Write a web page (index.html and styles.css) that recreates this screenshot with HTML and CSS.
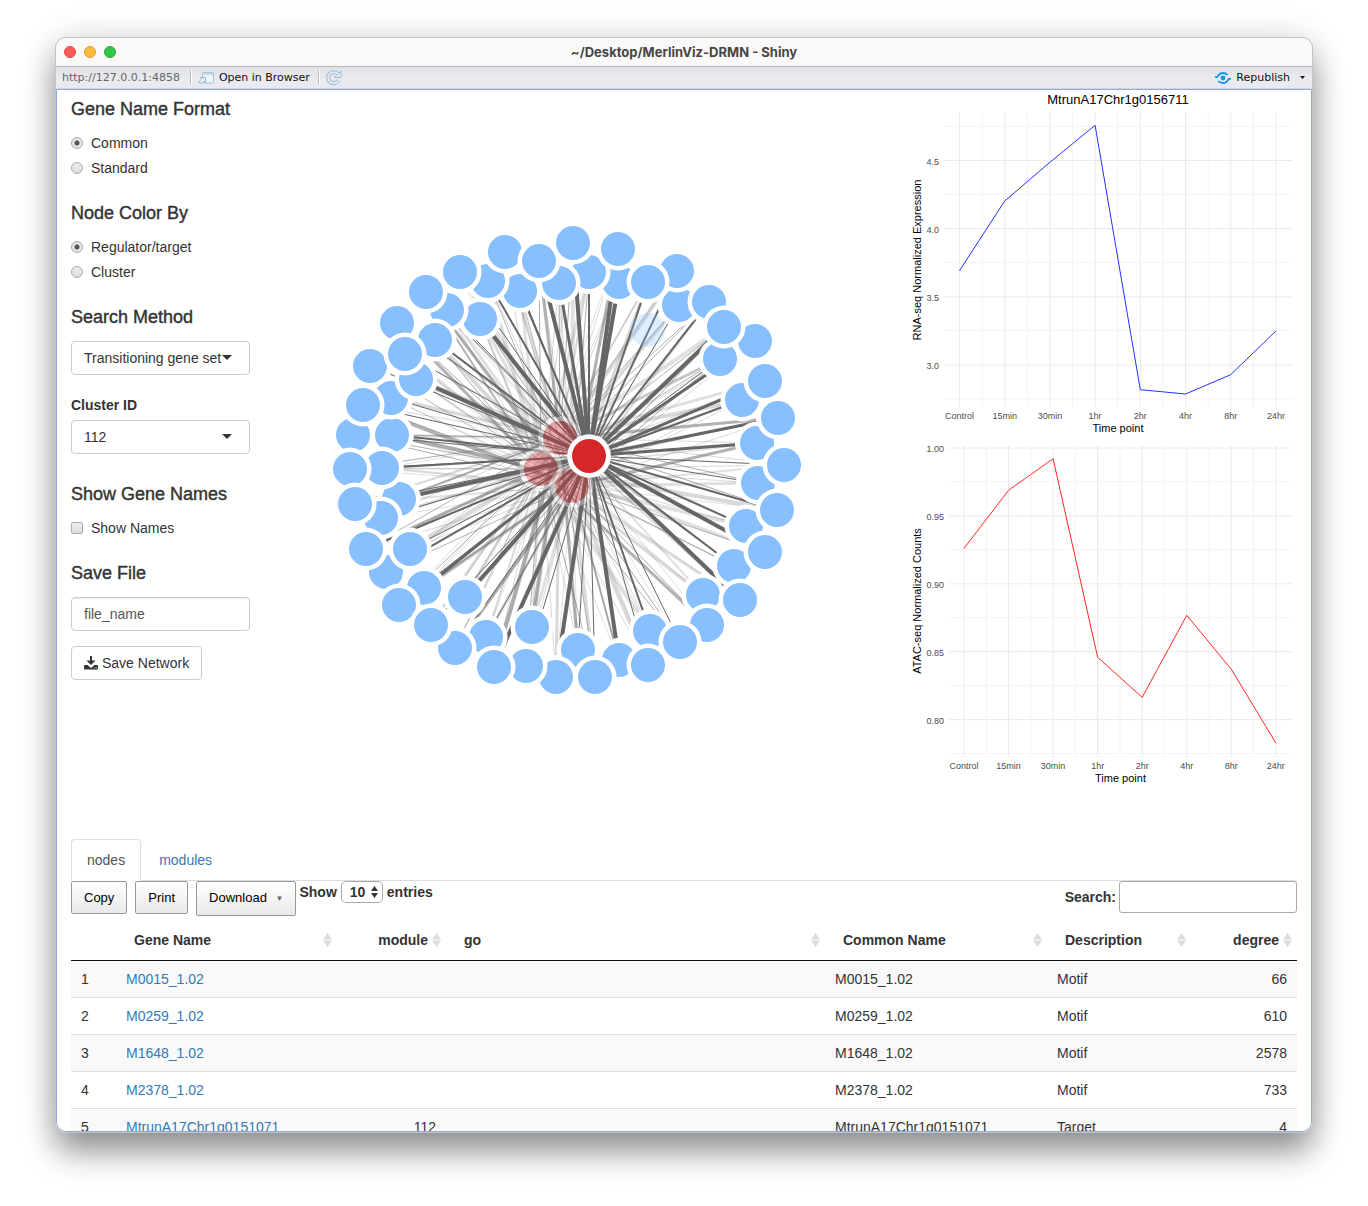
FILE: index.html
```html
<!DOCTYPE html>
<html lang="en">
<head>
<meta charset="utf-8">
<title>~/Desktop/MerlinViz-DRMN - Shiny</title>
<link rel="stylesheet" href="styles.css">
</head>
<body>
<div class="window">
  <header class="titlebar">
    <div class="lights"><span class="light light-close"></span><span class="light light-min"></span><span class="light light-zoom"></span></div>
    <div class="window-title">~/Desktop/MerlinViz-DRMN - Shiny</div>
  </header>
  <div class="toolbar">
    <span class="url">http://127.0.0.1:4858</span>
    <span class="sep"></span>
    <button class="tool" type="button">
      <svg width="16" height="12" viewBox="0 0 16 12" aria-hidden="true"><rect x="4.500" y=".5" width="11" height="10.500" rx="1" fill="#eef6fc" stroke="#a5bfd6"/><path d="M5 1h10v2H5z" fill="#c5daea"/><path d="M.6 10.200 3.800 7 2.500 5.500h5v5L6 9.200l-3 2.300z" fill="#e3edf5" stroke="#93a9bd" stroke-width=".8"/></svg>
      Open in Browser
    </button>
    <span class="sep"></span>
    <button class="tool" type="button" aria-label="Reload">
      <svg width="16" height="16" viewBox="0 0 16 16" aria-hidden="true"><path d="M12.600 10.200A5.500 5.500 0 1 1 11.800 4" fill="none" stroke="#a9b9cb" stroke-width="4"/><path d="M15 1v6.500H8.500z" fill="#dfeaf5" stroke="#a9b9cb"/><path d="M12.600 10.200A5.500 5.500 0 1 1 11.800 4" fill="none" stroke="#e2edf8" stroke-width="2"/></svg>
    </button>
    <button class="tool republish" type="button">
      <svg width="16" height="12" viewBox="0 0 16 12" aria-hidden="true"><circle cx="8" cy="6" r="2.400" fill="#1298e6"/><path d="M0 5.200h2.300C3.500 2.500 5.500 1 8 1c2 0 3.500.7 4.700 2" fill="none" stroke="#1298e6" stroke-width="1.800"/><path d="M16 6.800h-2.300C12.500 9.500 10.500 11 8 11c-2 0-3.500-.7-4.700-2" fill="none" stroke="#1298e6" stroke-width="1.800"/></svg>
      Republish
      <svg class="menu-caret" width="5" height="3" viewBox="0 0 5 3" aria-hidden="true"><path d="M0 0h5L2.500 3z" fill="#111"/></svg>
    </button>
  </div>
  <main class="page">
    <div class="panels">
      <form class="sidebar">
        <h4>Gene Name Format</h4>
        <label class="choice"><input type="radio" name="format" checked>Common</label>
        <label class="choice"><input type="radio" name="format">Standard</label>
        <h4>Node Color By</h4>
        <label class="choice"><input type="radio" name="color" checked>Regulator/target</label>
        <label class="choice"><input type="radio" name="color">Cluster</label>
        <h4>Search Method</h4>
        <div class="select"><select aria-label="Search Method"><option>Transitioning gene set</option></select></div>
        <label class="field-label" for="cluster">Cluster ID</label>
        <div class="select"><select id="cluster"><option>112</option></select></div>
        <h4>Show Gene Names</h4>
        <label class="choice"><input type="checkbox">Show Names</label>
        <h4>Save File</h4>
        <input class="text" type="text" aria-label="Save File" value="file_name">
        <button class="save" type="button">
          <svg width="14" height="14" viewBox="0 0 14 14" aria-hidden="true"><path d="M6 0h2v4.500h3.500L7 9 2.500 4.500H6z" fill="#333"/><path d="M1 9h2.500L7 12l3.500-3H13q1 0 1 1v2.500q0 1-1 1H1q-1 0-1-1V10q0-1 1-1z" fill="#333"/><path d="M10.500 11.800h.8m.8 0h.8" stroke="#fff"/></svg>
          Save Network
        </button>
      </form>
      <div class="network"><svg id="network" viewBox="280 90 599 640" role="img" aria-label="Gene network"></svg></div>
      <div class="charts">
        <svg id="rna" viewBox="907 90 390 350" role="img" aria-label="RNA-seq"></svg>
        <svg id="atac" viewBox="907 440 390 350" role="img" aria-label="ATAC-seq"></svg>
      </div>
    </div>
    <section class="data">
      <nav class="tabs"><a class="tab active" href="#nodes">nodes</a><a class="tab" href="#modules">modules</a></nav>
      <div class="controls">
        <button class="dt-button" type="button">Copy</button>
        <button class="dt-button" type="button">Print</button>
        <button class="dt-button dt-download" type="button">Download <span class="down">▼</span></button>
        <label class="length">Show
          <span class="stepper"><select><option>10</option></select><svg width="7" height="12" viewBox="0 0 7 12" aria-hidden="true"><path d="M0 5 3.500 0 7 5zM0 7h7l-3.500 5z" fill="#333"/></svg></span>
          entries</label>
        <label class="search">Search:<input type="search"></label>
      </div>
      <table id="nodes">
        <colgroup><col class="c-index"><col class="c-gene"><col class="c-module"><col><col class="c-common"><col class="c-desc"><col class="c-degree"></colgroup>
        <thead><tr>
          <th></th>
          <th><div class="head">Gene Name</div></th>
          <th class="num"><div class="head">module</div></th>
          <th><div class="head">go</div></th>
          <th><div class="head">Common Name</div></th>
          <th><div class="head">Description</div></th>
          <th class="num"><div class="head">degree</div></th>
        </tr></thead>
        <tbody>
          <tr><td>1</td><td><a href="#g1">M0015_1.02</a></td><td class="num"></td><td></td><td>M0015_1.02</td><td>Motif</td><td class="num">66</td></tr>
          <tr><td>2</td><td><a href="#g2">M0259_1.02</a></td><td class="num"></td><td></td><td>M0259_1.02</td><td>Motif</td><td class="num">610</td></tr>
          <tr><td>3</td><td><a href="#g3">M1648_1.02</a></td><td class="num"></td><td></td><td>M1648_1.02</td><td>Motif</td><td class="num">2578</td></tr>
          <tr><td>4</td><td><a href="#g4">M2378_1.02</a></td><td class="num"></td><td></td><td>M2378_1.02</td><td>Motif</td><td class="num">733</td></tr>
          <tr><td>5</td><td><a href="#g5">MtrunA17Chr1g0151071</a></td><td class="num">112</td><td></td><td>MtrunA17Chr1g0151071</td><td>Target</td><td class="num">4</td></tr>
        </tbody>
      </table>
    </section>
  </main>
</div>
<script src="script.js"></script>
</body>
</html>
```
FILE: styles.css
```css
* { box-sizing: border-box; }
body {
  margin: 0;
  height: 100vh;
  padding: 38px 56px 74px;
  background: #fff;
  color: #333;
  font: 14px/20px "Liberation Sans", Arial, sans-serif;
  overflow: hidden;
}
button, input, select { font: inherit; color: inherit; }
a { color: #337ab7; text-decoration: none; }

.window {
  height: 100%;
  display: flex;
  flex-direction: column;
  border-radius: 10px;
  overflow: hidden;
  background: #fff;
  box-shadow: 0 0 0 1px #c4c4c4, 0 0 36px rgba(0, 0, 0, .14), 0 20px 32px rgba(0, 0, 0, .4);
}
.titlebar {
  flex: none;
  height: 29px;
  display: grid;
  grid-template-columns: 1fr auto 1fr;
  align-items: center;
  padding: 0 8px;
  background: #fbf9f8;
  border-bottom: 1px solid #b3b6bd;
}
.lights { display: flex; gap: 8px; }
.light { width: 12px; height: 12px; border-radius: 50%; border: 1px solid; }
.light-close { background: #fc5b57; border-color: #e2463f; }
.light-min { background: #fdb93e; border-color: #e0a032; }
.light-zoom { background: #34c648; border-color: #27a837; }
.window-title { font: 700 13px/16px Inter, sans-serif; color: #464646; }

.toolbar {
  flex: none;
  height: 22px;
  display: flex;
  align-items: center;
  gap: 6px;
  padding: 0 6px;
  background: linear-gradient(#dfe2e8, #eaebef 60%, #e8eaef);
  border-bottom: 1px solid #d2d5db;
  font: 11px/16px "DejaVu Sans", sans-serif;
  color: #111;
}
.url { color: #666; padding-right: 4px; }
.sep { width: 2px; height: 15px; background: #fff; border-left: 1px solid #b8bcc4; }
.tool {
  display: flex;
  align-items: center;
  gap: 5px;
  padding: 0;
  margin-right: 2px;
  border: 0;
  background: none;
}
.republish { margin-left: auto; margin-right: 1px; }
.menu-caret { margin-left: 5px; }

.page {
  flex: 1;
  min-height: 0;
  overflow: hidden;
  border: 1px solid #8eaad8;
  border-radius: 0 0 10px 10px;
}
.panels { display: grid; grid-template-columns: 2fr 6fr 4fr; }
.sidebar { display: flex; flex-direction: column; padding: 9px 16px 0 14px; }
h4 { margin: 20px 0 14px; font-size: 18px; line-height: 20px; font-weight: 400; -webkit-text-stroke: 0.4px #333; }
h4:first-child { margin-top: 0; }
.choice { display: flex; align-items: center; gap: 8px; margin-bottom: 5px; }
.choice input {
  appearance: none;
  width: 12px;
  height: 12px;
  margin: 0;
  border: 1px solid #aaa;
  background: linear-gradient(#eee, #ddd);
}
.choice input[type="radio"] { border-radius: 50%; }
.choice input[type="checkbox"] { border-radius: 2px; }
.choice input:checked { background: radial-gradient(circle, #555 0 2px, #e6e6e6 3px); }
.select { position: relative; }
.select + h4 { margin-top: 30px; }
.select select, .text {
  appearance: none;
  display: block;
  width: 100%;
  height: 34px;
  padding: 0 12px;
  border: 1px solid #ccc;
  border-radius: 4px;
  background: #fff;
}
.select::after {
  content: "";
  position: absolute;
  right: 18px;
  top: 14px;
  border: 5px solid transparent;
  border-top-color: #333;
  border-bottom: 0;
}
.text { color: #555; box-shadow: inset 0 1px 1px rgba(0, 0, 0, .08); }
.field-label { margin: 20px 0 5px; font-weight: 700; }
.save {
  align-self: flex-start;
  display: flex;
  align-items: center;
  gap: 4px;
  height: 34px;
  margin-top: 15px;
  padding: 0 12px;
  border: 1px solid #ccc;
  border-radius: 4px;
  background: #fff;
}
.network { padding: 0 14px; }
.network svg, .charts svg { display: block; width: 100%; height: auto; }
.charts { padding: 0 14px; }

.edge { fill: none; stroke: #666; }
.halo { fill: #fff; }
.target { fill: #87bfff; }
.regulator { fill: #d62728; }
.axis-tick { font-size: 9px; fill: #4d4d4d; }
.axis-title { font-size: 11px; fill: #000; }
.chart-title { font-size: 13px; fill: #000; }
.grid-major { stroke: #ebebeb; }
.grid-minor { stroke: #f4f4f4; }

.data { padding: 0 14px; margin-top: 49px; }
.tabs { display: flex; gap: 2px; border-bottom: 1px solid #ddd; }
.tab { padding: 10px 16px; border-top: 1px solid transparent; }
.tab.active {
  padding: 10px 15px;
  margin-bottom: -1px;
  border: 1px solid #ddd;
  border-bottom-color: #fff;
  border-radius: 4px 4px 0 0;
  color: #555;
}
.controls { display: flex; align-items: flex-start; height: 39px; }
.dt-button {
  height: 33px;
  padding: 0 12px;
  margin-right: 8px;
  border: 1px solid #999;
  border-radius: 2px;
  background: linear-gradient(#fff, #e9e9e9);
  color: #000;
  font-size: 13px;
}
.dt-download { height: 35px; margin-right: 3px; }
.down { padding-left: 5px; font-size: 8px; vertical-align: 1px; color: #666; }
.length, .search { display: flex; align-items: center; gap: 4px; font-weight: 700; }
.length { height: 22px; }
.stepper { display: flex; align-items: center; height: 22px; padding-right: 4px; border: 1px solid #aaa; border-radius: 5px; }
.stepper select { appearance: none; width: 29px; padding: 0 0 0 8px; border: 0; background: none; font-weight: 700; }
.search { margin-left: auto; gap: 3px; }
.search input { appearance: none; width: 178px; height: 32px; border: 1px solid #aaa; border-radius: 3px; }

table { width: 100%; table-layout: fixed; border-collapse: separate; border-spacing: 0; }
.c-index { width: 45px; }
.c-gene { width: 221px; }
.c-module { width: 109px; }
.c-common { width: 222px; }
.c-desc { width: 144px; }
.c-degree { width: 106px; }
th { padding: 0; border-bottom: 1px solid #111; text-align: left; }
.head { display: flex; align-items: center; justify-content: space-between; gap: 4px; padding: 10px 5px 10px 18px; }
th.num .head { justify-content: flex-end; }
.sort { flex: none; fill: #dcdcdc; }
td { height: 37px; padding: 8px 10px; border-bottom: 1px solid #ddd; white-space: nowrap; }
tbody tr:nth-child(odd) { background: #f9f9f9; }
td.num { text-align: right; }
```
FILE: script.js
```js
const NS = 'http://www.w3.org/2000/svg';
function add(parent, tag, attrs, text) {
  const el = document.createElementNS(NS, tag);
  for (const key in attrs) el.setAttribute(key, attrs[key]);
  if (text) el.textContent = text;
  parent.appendChild(el);
  return el;
}

// Targets in drawing order: x, y, weight of the edge to the selected regulator.
const targets = [
  [619, 282, 4], [589, 272, 2], [679, 305, 1], [677, 271, 2], [709, 302, 2], [755, 341, 3],
  [720, 359, 1], [742, 400, 2], [757, 443, 3], [758, 483, 1], [746, 526, 2], [734, 566, 2],
  [703, 595, 0], [707, 625, 0], [650, 631, 2], [619, 660, 4], [578, 650, 1], [556, 677, 4],
  [526, 666, 1], [486, 637, 1], [455, 648, 1], [424, 588, 3], [386, 572, 2], [399, 499, 4],
  [381, 518, 1], [392, 435, 2], [382, 468, 2], [353, 435, 1], [391, 398, 1], [416, 379, 4],
  [480, 319, 4], [447, 310, 1], [435, 340, 2], [370, 366, 1], [397, 323, 1], [520, 291, 2],
  [488, 281, 2], [559, 283, 3], [505, 252, 1], [539, 261, 4], [460, 272, 1], [426, 292, 1],
  [405, 354, 1], [363, 405, 1], [350, 469, 1], [355, 504, 1], [366, 549, 2], [410, 549, 1],
  [399, 605, 1], [465, 597, 4], [431, 625, 1], [494, 667, 4], [532, 627, 0], [595, 677, 1],
  [648, 665, 1], [680, 642, 1], [740, 600, 4], [765, 552, 4], [777, 510, 2], [784, 465, 1],
  [778, 418, 3], [765, 381, 3], [724, 327, 4], [648, 282, 2], [618, 249, 4], [573, 243, 4]
];
const hub = [589, 456];
const dimmed = [[560, 438], [541, 469], [572, 486]];

function edge(svg, from, to, width, opacity) {
  const dx = to[0] - from[0], dy = to[1] - from[1];
  const k = 22 / Math.hypot(dx, dy);
  add(svg, 'line', { class: 'edge', x1: from[0] + dx * k, y1: from[1] + dy * k, x2: to[0] - dx * k, y2: to[1] - dy * k,
    'stroke-width': width, 'stroke-opacity': opacity });
}
function node(svg, kind, x, y, opacity) {
  const g = add(svg, 'g', { opacity });
  add(g, 'circle', { class: 'halo', cx: x, cy: y, r: 21.5 });
  add(g, 'circle', { class: kind, cx: x, cy: y, r: 17 });
}

const net = document.getElementById('network');
const dimWidths = [1, 1, 3, 1, 2, 1, 4, 1, 1, 3, 1];
const dimOpacity = [.25, .5, .25, .2, .55, .2, .25];
targets.forEach((t, i) => dimmed.forEach((h, j) => {
  const n = i * 3 + j;
  edge(net, h, t, dimWidths[n * 5 % 11], dimOpacity[n * 3 % 7]);
}));
targets.forEach(t => { if (t[2]) edge(net, hub, t, t[2], 1); });
dimmed.forEach(h => node(net, 'regulator', h[0], h[1], .35));
add(net, 'circle', { class: 'target', cx: 648, cy: 330, r: 17, opacity: .27 });
targets.forEach(t => node(net, 'target', t[0], t[1], 1));
node(net, 'regulator', hub[0], hub[1], 1);

function chart(id, c) {
  const svg = document.getElementById(id);
  const times = ['Control', '15min', '30min', '1hr', '2hr', '4hr', '8hr', '24hr'];
  const x = i => c.x0 + i * c.dx;
  c.minor.forEach(y => add(svg, 'line', { class: 'grid-minor', x1: c.left, x2: 1292, y1: y, y2: y }));
  times.forEach((t, i) => { if (i < 7) add(svg, 'line', { class: 'grid-minor', x1: x(i + .5), x2: x(i + .5), y1: c.top, y2: c.bottom }); });
  c.labels.forEach((label, i) => {
    const y = c.y0 + i * c.dy;
    add(svg, 'line', { class: 'grid-major', x1: c.left, x2: 1292, y1: y, y2: y });
    add(svg, 'text', { class: 'axis-tick', x: c.left - 5, y: y + 4, 'text-anchor': 'end' }, label);
  });
  times.forEach((t, i) => {
    add(svg, 'line', { class: 'grid-major', x1: x(i), x2: x(i), y1: c.top, y2: c.bottom });
    add(svg, 'text', { class: 'axis-tick', x: x(i), y: c.bottom + 12, 'text-anchor': 'middle' }, t);
  });
  add(svg, 'polyline', { points: c.data.map((y, i) => x(i) + ',' + y).join(' '), fill: 'none', stroke: c.color, 'stroke-width': 1 });
  const mid = (c.left + 1292) / 2;
  add(svg, 'text', { class: 'axis-title', x: mid, y: c.bottom + 25, 'text-anchor': 'middle' }, 'Time point');
  add(svg, 'text', { class: 'axis-title', 'text-anchor': 'middle', transform: `translate(921 ${c.midY}) rotate(-90)` }, c.title);
  if (c.heading) add(svg, 'text', { class: 'chart-title', x: mid, y: 104, 'text-anchor': 'middle' }, c.heading);
}
chart('rna', {
  left: 944, top: 112, bottom: 407, x0: 959.5, dx: 45.2, y0: 160.5, dy: 68.2, midY: 260, color: '#1f35ff',
  minor: [126.5, 194.5, 262.5, 330.5, 399], labels: ['4.5', '4.0', '3.5', '3.0'],
  data: [270.7, 201, 162.3, 125.3, 389.7, 394, 374.7, 331],
  title: 'RNA-seq Normalized Expression', heading: 'MtrunA17Chr1g0156711'
});
chart('atac', {
  left: 949, top: 445, bottom: 757, x0: 964, dx: 44.55, y0: 448, dy: 67.9, midY: 601, color: '#ff2a1f',
  minor: [481.5, 549.5, 617.5, 685.5, 753.5], labels: ['1.00', '0.95', '0.90', '0.85', '0.80'],
  data: [548.3, 490.3, 458.7, 657.3, 697.3, 615.3, 669.3, 743],
  title: 'ATAC-seq Normalized Counts'
});

document.querySelectorAll('.head').forEach(head => {
  const icon = add(head, 'svg', { class: 'sort', width: 9, height: 14, viewBox: '0 0 9 14' });
  add(icon, 'path', { d: 'M0 6.500 4.500 0 9 6.500zM0 7.500h9L4.500 14z' });
});
```
